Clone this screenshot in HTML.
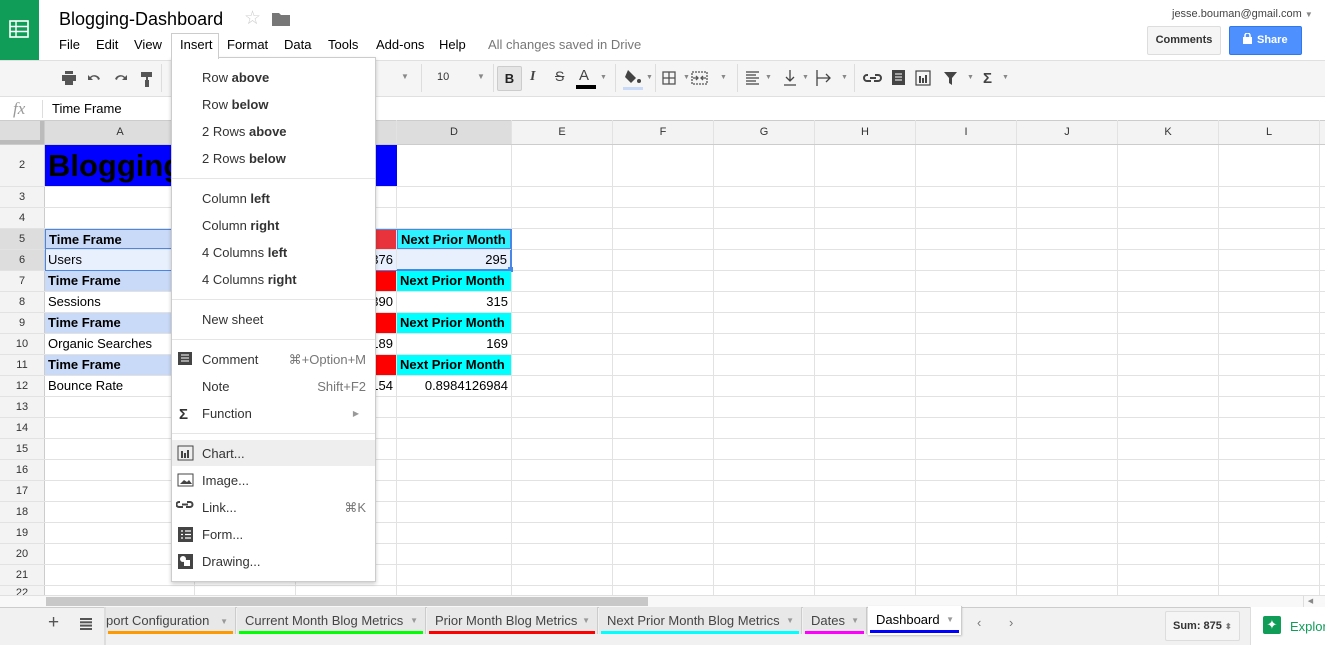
<!DOCTYPE html>
<html><head><meta charset="utf-8">
<style>
*{margin:0;padding:0;box-sizing:border-box}
body{width:1325px;height:645px;overflow:hidden;position:relative;background:#fff;font-family:"Liberation Sans",Arial,sans-serif;font-size:13px;color:#222;white-space:nowrap}
.a{position:absolute}
.vl{position:absolute;top:120px;height:476px;width:1px;background:#e2e2e2}
.hl{position:absolute;left:0;width:1325px;height:1px;background:#e2e2e2}
.rh{position:absolute;left:0;width:44px;text-align:center;font-size:11px;color:#333;background:#f3f3f3}
.ch{position:absolute;top:121px;height:23px;line-height:23px;text-align:center;font-size:11px;color:#333}
.cell{position:absolute;height:20px;line-height:20px;font-size:13px;padding:0 3px;white-space:nowrap;overflow:hidden;color:#000}
.b{font-weight:bold}
.mi{position:absolute;left:202px;font-size:13px;color:#333;white-space:nowrap}
.sc{position:absolute;right:0;font-size:13px;color:#777}
.sep{position:absolute;left:172px;width:203px;height:1px;background:#e5e5e5}
.tab{position:absolute;top:607px;height:27px;line-height:27px;font-size:13px;color:#444;background:#e8e8e8;padding-left:8px;border-right:1px solid #ccc}
.tab .u{position:absolute;left:2px;right:2px;bottom:0;height:3px}
.tab .dd{position:absolute;right:7px;top:0;font-size:8px;color:#999}
</style></head><body>
<div class="a" style="left:0;top:0;width:39px;height:60px;background:#0f9d58"></div>
<svg class="a" style="left:9px;top:20px" width="20" height="18" viewBox="0 0 20 18"><rect x="1" y="1" width="18" height="16" fill="none" stroke="#fff" stroke-width="1.6"/><line x1="1" y1="6.5" x2="19" y2="6.5" stroke="#fff" stroke-width="1.4"/><line x1="1" y1="11.5" x2="19" y2="11.5" stroke="#fff" stroke-width="1.4"/><line x1="7" y1="1" x2="7" y2="17" stroke="#fff" stroke-width="1.4"/></svg>
<div class="a" style="left:59px;top:9px;font-size:18px;color:#000">Blogging-Dashboard</div>
<div class="a" style="left:244px;top:7px;font-size:19px;color:#ccc">☆</div>
<svg class="a" style="left:272px;top:12px" width="18" height="14"><path d="M0 1h7l2 2h9v11H0z" fill="#777"/></svg>
<div class="a" style="left:59px;top:37px;font-size:13px;color:#000;width:700px;height:20px">
<span style="position:absolute;left:0">File</span><span style="position:absolute;left:37px">Edit</span><span style="position:absolute;left:75px">View</span><span style="position:absolute;left:168px">Format</span><span style="position:absolute;left:225px">Data</span><span style="position:absolute;left:269px">Tools</span><span style="position:absolute;left:317px">Add-ons</span><span style="position:absolute;left:380px">Help</span><span style="position:absolute;left:429px;color:#777">All changes saved in Drive</span></div>
<div class="a" style="left:1172px;top:8px;font-size:11px;color:#444">jesse.bouman@gmail.com <span style="font-size:8px;color:#888">▼</span></div>
<div class="a" style="left:1147px;top:26px;width:74px;height:29px;background:#f5f5f5;border:1px solid #ddd;border-radius:2px;font-size:11px;font-weight:bold;color:#333;text-align:center;line-height:27px">Comments</div>
<div class="a" style="left:1229px;top:26px;width:73px;height:29px;background:#4d90fe;border:1px solid #3079ed;border-radius:2px;font-size:11px;font-weight:bold;color:#fff;line-height:27px;padding-left:13px"><svg width="9" height="11" style="vertical-align:-1px;margin-right:5px"><rect x="0" y="4" width="9" height="7" fill="#fff"/><path d="M2 4V2.5a2.5 2.5 0 0 1 5 0V4" stroke="#fff" stroke-width="1.5" fill="none"/></svg>Share</div>
<div class="a" style="left:0;top:60px;width:1325px;height:37px;background:#f5f5f5;border-top:1px solid #e0e0e0;border-bottom:1px solid #e0e0e0"></div>
<svg class="a" style="left:60px;top:70px" width="95" height="18" fill="#555">
<rect x="2" y="5" width="14" height="6"/><rect x="5" y="1" width="8" height="3"/><rect x="5" y="10" width="8" height="5"/>
<path d="M30 7a6 6 0 0 1 10 2l-2 1a4 4 0 0 0-7-2l2 2h-5v-5z"/>
<path d="M65 7a6 6 0 0 0-10 2l2 1a4 4 0 0 1 7-2l-2 2h5v-5z"/>
<rect x="81" y="2" width="11" height="5"/><rect x="86" y="7" width="2" height="3"/><rect x="85" y="10" width="4" height="7"/>
</svg>
<div class="a" style="left:161px;top:64px;width:1px;height:28px;background:#ddd"></div>
<div class="a" style="left:401px;top:72px;font-size:8px;color:#888">▼</div>
<div class="a" style="left:421px;top:64px;width:1px;height:28px;background:#ddd"></div>
<div class="a" style="left:437px;top:71px;font-size:11px;color:#333">10</div>
<div class="a" style="left:477px;top:72px;font-size:8px;color:#888">▼</div>
<div class="a" style="left:493px;top:64px;width:1px;height:28px;background:#ddd"></div>
<div class="a" style="left:497px;top:66px;width:25px;height:25px;background:#e5e5e5;border:1px solid #ccc;border-radius:2px;text-align:center;line-height:23px;font-weight:bold;font-size:13px;color:#222">B</div>
<div class="a" style="left:530px;top:69px;font-style:italic;font-size:14px;color:#444;font-family:'Liberation Serif',serif;font-weight:bold">I</div>
<div class="a" style="left:555px;top:68px;font-size:14px;color:#444;text-decoration:line-through">S</div>
<div class="a" style="left:579px;top:67px;font-size:15px;color:#444">A</div>
<div class="a" style="left:576px;top:85px;width:20px;height:4px;background:#000"></div>
<div class="a" style="left:600px;top:74px;font-size:7px;color:#888">▼</div>
<div class="a" style="left:615px;top:64px;width:1px;height:28px;background:#ddd"></div>
<svg class="a" style="left:623px;top:68px" width="20" height="22"><path d="M3 3l8 8-5 5-6-6z" fill="#444" transform="translate(2,-1)"/><circle cx="16" cy="13" r="2" fill="#444"/><rect x="0" y="19" width="20" height="3" fill="#c9daf8"/></svg>
<div class="a" style="left:646px;top:74px;font-size:7px;color:#888">▼</div>
<div class="a" style="left:655px;top:64px;width:1px;height:28px;background:#ddd"></div>
<svg class="a" style="left:662px;top:70px" width="100" height="16" fill="none" stroke="#555" stroke-width="1.3"><rect x="1" y="2" width="12" height="12"/><line x1="7" y1="2" x2="7" y2="14"/><line x1="1" y1="8" x2="13" y2="8"/><rect x="30" y="2" width="15" height="12" stroke-dasharray="2 1"/><path d="M31 8h5M44 8h-5M34 6l2 2-2 2M41 6l-2 2 2 2"/></svg>
<div class="a" style="left:683px;top:74px;font-size:7px;color:#888">▼</div>
<div class="a" style="left:720px;top:74px;font-size:7px;color:#888">▼</div>
<div class="a" style="left:737px;top:64px;width:1px;height:28px;background:#ddd"></div>
<svg class="a" style="left:745px;top:68px" width="95" height="20" fill="none" stroke="#444" stroke-width="1.3"><path d="M1 4h13M1 7h10M1 10h13M1 13h10M1 16h13"/><path d="M45 2v11M41 9l4 4 4-4M39 17h12"/><path d="M72 2v16M72 10h13M81 6l4 4-4 4"/></svg>
<div class="a" style="left:765px;top:74px;font-size:7px;color:#888">▼</div>
<div class="a" style="left:802px;top:74px;font-size:7px;color:#888">▼</div>
<div class="a" style="left:841px;top:74px;font-size:7px;color:#888">▼</div>
<div class="a" style="left:854px;top:64px;width:1px;height:28px;background:#ddd"></div>
<svg class="a" style="left:863px;top:67px" width="140" height="22"><path d="M5 8h-1a3 3 0 0 0 0 6h4M12 8h3a3 3 0 0 1 0 6h-4M7 11h6" stroke="#444" stroke-width="2" fill="none"/><rect x="29" y="3" width="13" height="15" fill="#444"/><path d="M32 7h7M32 10h7M32 13h7" stroke="#fff"/><rect x="53" y="4" width="14" height="14" fill="none" stroke="#444" stroke-width="1.2"/><rect x="56" y="9" width="2" height="7" fill="#444"/><rect x="59" y="11" width="2" height="5" fill="#444"/><rect x="62" y="8" width="2" height="8" fill="#444"/><path d="M81 5h13l-5 6v7l-3-2v-5z" fill="#444"/><text x="120" y="16" font-size="15" font-weight="bold" fill="#444" font-family="Liberation Sans">Σ</text></svg>
<div class="a" style="left:967px;top:74px;font-size:7px;color:#888">▼</div>
<div class="a" style="left:1002px;top:74px;font-size:7px;color:#888">▼</div>
<div class="a" style="left:13px;top:99px;font-family:'Liberation Serif',serif;font-style:italic;font-size:17px;color:#999">fx</div>
<div class="a" style="left:42px;top:100px;width:1px;height:18px;background:#ddd"></div>
<div class="a" style="left:52px;top:101px;font-size:13px;color:#000">Time Frame</div>
<div class="a" style="left:0;top:120px;width:1325px;height:1px;background:#ccc"></div>
<div class="a" style="left:0;top:121px;width:1325px;height:23px;background:#f3f3f3"></div>
<div class="a" style="left:0;top:121px;width:44px;height:23px;background:#ddd;border-right:4px solid #bbb;border-bottom:4px solid #bbb"></div>
<div class="a" style="left:45px;top:121px;width:351px;height:23px;background:#ddd"></div>
<div class="a" style="left:397px;top:121px;width:114px;height:23px;background:#ddd"></div>
<div class="vl" style="left:44px;background:#ccc"></div><div class="vl" style="left:194px"></div><div class="vl" style="left:295px"></div><div class="vl" style="left:396px"></div><div class="vl" style="left:511px"></div><div class="vl" style="left:612px"></div><div class="vl" style="left:713px"></div><div class="vl" style="left:814px"></div><div class="vl" style="left:915px"></div><div class="vl" style="left:1016px"></div><div class="vl" style="left:1117px"></div><div class="vl" style="left:1218px"></div><div class="vl" style="left:1319px"></div>
<div class="hl" style="top:144px;background:#ccc"></div><div class="hl" style="top:186px"></div><div class="hl" style="top:207px"></div><div class="hl" style="top:228px"></div><div class="hl" style="top:249px"></div><div class="hl" style="top:270px"></div><div class="hl" style="top:291px"></div><div class="hl" style="top:312px"></div><div class="hl" style="top:333px"></div><div class="hl" style="top:354px"></div><div class="hl" style="top:375px"></div><div class="hl" style="top:396px"></div><div class="hl" style="top:417px"></div><div class="hl" style="top:438px"></div><div class="hl" style="top:459px"></div><div class="hl" style="top:480px"></div><div class="hl" style="top:501px"></div><div class="hl" style="top:522px"></div><div class="hl" style="top:543px"></div><div class="hl" style="top:564px"></div><div class="hl" style="top:585px"></div>
<div class="ch" style="left:45px;width:150px">A</div><div class="ch" style="left:397px;width:114px">D</div><div class="ch" style="left:512px;width:100px">E</div><div class="ch" style="left:613px;width:100px">F</div><div class="ch" style="left:714px;width:100px">G</div><div class="ch" style="left:815px;width:100px">H</div><div class="ch" style="left:916px;width:100px">I</div><div class="ch" style="left:1017px;width:100px">J</div><div class="ch" style="left:1118px;width:100px">K</div><div class="ch" style="left:1219px;width:100px">L</div>
<div class="rh" style="top:145px;height:41px;line-height:41px">2</div>
<div class="rh" style="top:187px;height:20px;line-height:20px">3</div><div class="rh" style="top:208px;height:20px;line-height:20px">4</div>
<div class="rh" style="top:229px;height:20px;line-height:20px;background:#ddd">5</div><div class="rh" style="top:250px;height:20px;line-height:20px;background:#ddd">6</div>
<div class="rh" style="top:271px;height:20px;line-height:20px">7</div><div class="rh" style="top:292px;height:20px;line-height:20px">8</div><div class="rh" style="top:313px;height:20px;line-height:20px">9</div><div class="rh" style="top:334px;height:20px;line-height:20px">10</div><div class="rh" style="top:355px;height:20px;line-height:20px">11</div><div class="rh" style="top:376px;height:20px;line-height:20px">12</div><div class="rh" style="top:397px;height:20px;line-height:20px">13</div><div class="rh" style="top:418px;height:20px;line-height:20px">14</div><div class="rh" style="top:439px;height:20px;line-height:20px">15</div><div class="rh" style="top:460px;height:20px;line-height:20px">16</div><div class="rh" style="top:481px;height:20px;line-height:20px">17</div><div class="rh" style="top:502px;height:20px;line-height:20px">18</div><div class="rh" style="top:523px;height:20px;line-height:20px">19</div><div class="rh" style="top:544px;height:20px;line-height:20px">20</div><div class="rh" style="top:565px;height:20px;line-height:20px">21</div><div class="rh" style="top:586px;height:10px;line-height:14px;overflow:hidden">22</div>
<div class="cell b" style="left:45px;top:145px;width:352px;height:41px;line-height:41px;background:#0000ff;font-size:31px;padding-left:3px">Blogging-Dashboard</div>
<div class="cell b" style="left:45px;top:229px;width:150px;background:#c9daf8;border:1px solid #4a86e8">Time Frame</div>
<div class="cell" style="left:45px;top:250px;width:150px;background:#e8f0fe">Users</div>
<div class="cell b" style="left:45px;top:271px;width:150px;background:#c9daf8">Time Frame</div>
<div class="cell" style="left:45px;top:292px;width:150px">Sessions</div>
<div class="cell b" style="left:45px;top:313px;width:150px;background:#c9daf8">Time Frame</div>
<div class="cell" style="left:45px;top:334px;width:150px">Organic Searches</div>
<div class="cell b" style="left:45px;top:355px;width:150px;background:#c9daf8">Time Frame</div>
<div class="cell" style="left:45px;top:376px;width:150px">Bounce Rate</div>
<div class="cell" style="left:195px;top:250px;width:201px;background:#e8f0fe"></div>
<div class="cell" style="left:296px;top:229px;width:100px;background:#e8323c"></div>
<div class="cell" style="left:296px;top:250px;width:100px;text-align:right;background:#e8f0fe">376</div>
<div class="cell" style="left:296px;top:271px;width:100px;background:#f00"></div>
<div class="cell" style="left:296px;top:292px;width:100px;text-align:right">390</div>
<div class="cell" style="left:296px;top:313px;width:100px;background:#f00"></div>
<div class="cell" style="left:296px;top:334px;width:100px;text-align:right">189</div>
<div class="cell" style="left:296px;top:355px;width:100px;background:#f00"></div>
<div class="cell" style="left:296px;top:376px;width:100px;text-align:right">154</div>
<div class="cell b" style="left:397px;top:229px;width:114px;background:#2ef2ff;border:1px solid #4a86e8">Next Prior Month</div>
<div class="cell" style="left:397px;top:250px;width:114px;text-align:right;background:#e8f0fe;border-bottom:1px solid #4a86e8;border-right:1px solid #4a86e8">295</div>
<div class="a" style="left:508px;top:267px;width:5px;height:5px;background:#4a86e8"></div>
<div class="a" style="left:45px;top:229px;width:467px;height:42px;border:1px solid #4a86e8;pointer-events:none"></div>
<div class="cell b" style="left:397px;top:271px;width:114px;background:#0ff">Next Prior Month</div>
<div class="cell" style="left:397px;top:292px;width:114px;text-align:right">315</div>
<div class="cell b" style="left:397px;top:313px;width:114px;background:#0ff">Next Prior Month</div>
<div class="cell" style="left:397px;top:334px;width:114px;text-align:right">169</div>
<div class="cell b" style="left:397px;top:355px;width:114px;background:#0ff">Next Prior Month</div>
<div class="cell" style="left:397px;top:376px;width:114px;text-align:right">0.8984126984</div>
<div class="a" style="left:0;top:595px;width:1325px;height:12px;background:#f8f8f8;border-top:1px solid #e0e0e0"></div>
<div class="a" style="left:46px;top:597px;width:602px;height:9px;background:#c8c8c8"></div>
<div class="a" style="left:1303px;top:596px;width:14px;height:11px;border-left:1px solid #ddd;font-size:7px;color:#888;text-align:center;line-height:11px">◀</div>
<div class="a" style="left:0;top:607px;width:1325px;height:38px;background:#f1f1f1;border-top:1px solid #ccc"></div>
<div class="a" style="left:48px;top:612px;font-size:19px;color:#555">+</div>
<svg class="a" style="left:80px;top:618px" width="12" height="12" fill="#555"><rect y="0" width="12" height="2"/><rect y="3.3" width="12" height="2"/><rect y="6.6" width="12" height="2"/><rect y="10" width="12" height="2"/></svg>
<div class="a" style="left:104px;top:607px;width:2px;height:38px;background:#ddd"></div>
<div class="tab" style="left:106px;width:130px;padding-left:0">port Configuration<span class="dd" style="top:1px">▼</span><div class="u" style="background:#ff9900"></div></div>
<div class="tab" style="left:237px;width:189px">Current Month Blog Metrics<span class="dd">▼</span><div class="u" style="background:#00ff00"></div></div>
<div class="tab" style="left:427px;width:171px">Prior Month Blog Metrics<span class="dd">▼</span><div class="u" style="background:#f00"></div></div>
<div class="tab" style="left:599px;width:203px">Next Prior Month Blog Metrics<span class="dd">▼</span><div class="u" style="background:#0ff"></div></div>
<div class="tab" style="left:803px;width:64px">Dates<span class="dd">▼</span><div class="u" style="background:#f0f"></div></div>
<div class="tab" style="left:868px;top:606px;height:29px;width:94px;background:#fff;color:#000;border-right:1px solid #ccc;box-shadow:0 1px 2px rgba(0,0,0,.2)">Dashboard<span class="dd">▼</span><div class="u" style="background:#00f;bottom:2px"></div></div>
<div class="a" style="left:977px;top:615px;font-size:13px;color:#777">‹</div>
<div class="a" style="left:1009px;top:615px;font-size:13px;color:#777">›</div>
<div class="a" style="left:1165px;top:611px;width:75px;height:30px;background:#f5f5f5;border:1px solid #ddd;border-radius:2px;font-size:11px;font-weight:bold;color:#333;line-height:28px;padding-left:7px">Sum: 875 <span style="font-size:8px;color:#777">⬍</span></div>
<div class="a" style="left:1250px;top:607px;width:75px;height:38px;background:#fff;border-left:1px solid #ddd"></div>
<div class="a" style="left:1263px;top:616px;width:18px;height:18px;background:#0f9d58;border-radius:2px;color:#fff;font-size:13px;text-align:center;line-height:18px">✦</div>
<div class="a" style="left:1290px;top:619px;font-size:13px;color:#0f9d58">Explore</div>
<div class="a" style="left:171px;top:33px;width:48px;height:26px;background:#fff;border:1px solid #ccc;border-bottom:none;z-index:3;font-size:13px;color:#000;padding:3px 0 0 8px">Insert</div>
<div class="a" style="left:171px;top:57px;width:205px;height:525px;background:#fff;border:1px solid #ccc;box-shadow:0 2px 4px rgba(0,0,0,.2);z-index:2"></div>
<div class="a" style="left:0;top:0;width:1325px;height:645px;z-index:4;pointer-events:none">
<div class="a" style="left:172px;top:440px;width:203px;height:26px;background:#eee"></div>
<div class="mi" style="top:70px">Row <b>above</b></div>
<div class="mi" style="top:97px">Row <b>below</b></div>
<div class="mi" style="top:124px">2 Rows <b>above</b></div>
<div class="mi" style="top:151px">2 Rows <b>below</b></div>
<div class="sep" style="top:178px"></div>
<div class="mi" style="top:191px">Column <b>left</b></div>
<div class="mi" style="top:218px">Column <b>right</b></div>
<div class="mi" style="top:245px">4 Columns <b>left</b></div>
<div class="mi" style="top:272px">4 Columns <b>right</b></div>
<div class="sep" style="top:299px"></div>
<div class="mi" style="top:312px">New sheet</div>
<div class="sep" style="top:339px"></div>
<div class="mi" style="top:352px;width:164px">Comment<span class="sc">⌘+Option+M</span></div>
<div class="mi" style="top:379px;width:164px">Note<span class="sc">Shift+F2</span></div>
<div class="mi" style="top:406px;width:157px">Function<span class="sc" style="font-size:8px;top:3px;color:#999">▶</span></div>
<div class="sep" style="top:433px"></div>
<div class="mi" style="top:446px">Chart...</div>
<div class="mi" style="top:473px">Image...</div>
<div class="mi" style="top:500px;width:164px">Link...<span class="sc">⌘K</span></div>
<div class="mi" style="top:527px">Form...</div>
<div class="mi" style="top:554px">Drawing...</div>
<svg class="a" style="left:176px;top:350px" width="20" height="222">
<rect x="2" y="2" width="14" height="13" fill="#444"/><path d="M5 5h8M5 8h8M5 11h8" stroke="#fff"/>
<text x="3" y="69" font-size="15" font-weight="bold" fill="#333" font-family="Liberation Sans">Σ</text>
<rect x="2" y="96" width="15" height="14" fill="none" stroke="#444"/><rect x="5" y="101" width="2" height="7" fill="#444"/><rect x="8" y="103" width="2" height="5" fill="#444"/><rect x="11" y="100" width="2" height="8" fill="#444"/>
<rect x="2" y="124" width="15" height="12" fill="none" stroke="#444"/><path d="M4 134l4-4 3 2 2-2 3 4z" fill="#444"/>
<path d="M4 152h-1a2.5 2.5 0 0 0 0 5h4M11 152h3a2.5 2.5 0 0 1 0 5h-4M6 154.5h6" stroke="#444" stroke-width="2" fill="none"/>
<rect x="2" y="177" width="15" height="15" fill="#444"/><path d="M5 181h2M9 181h6M5 184.5h2M9 184.5h6M5 188h2M9 188h6" stroke="#fff" stroke-width="1.3"/>
<rect x="2" y="204" width="15" height="15" fill="#444"/><circle cx="7" cy="209" r="3" fill="#fff"/><rect x="8" y="210" width="6" height="6" fill="#fff"/>
</svg>
</div>
</body></html>
